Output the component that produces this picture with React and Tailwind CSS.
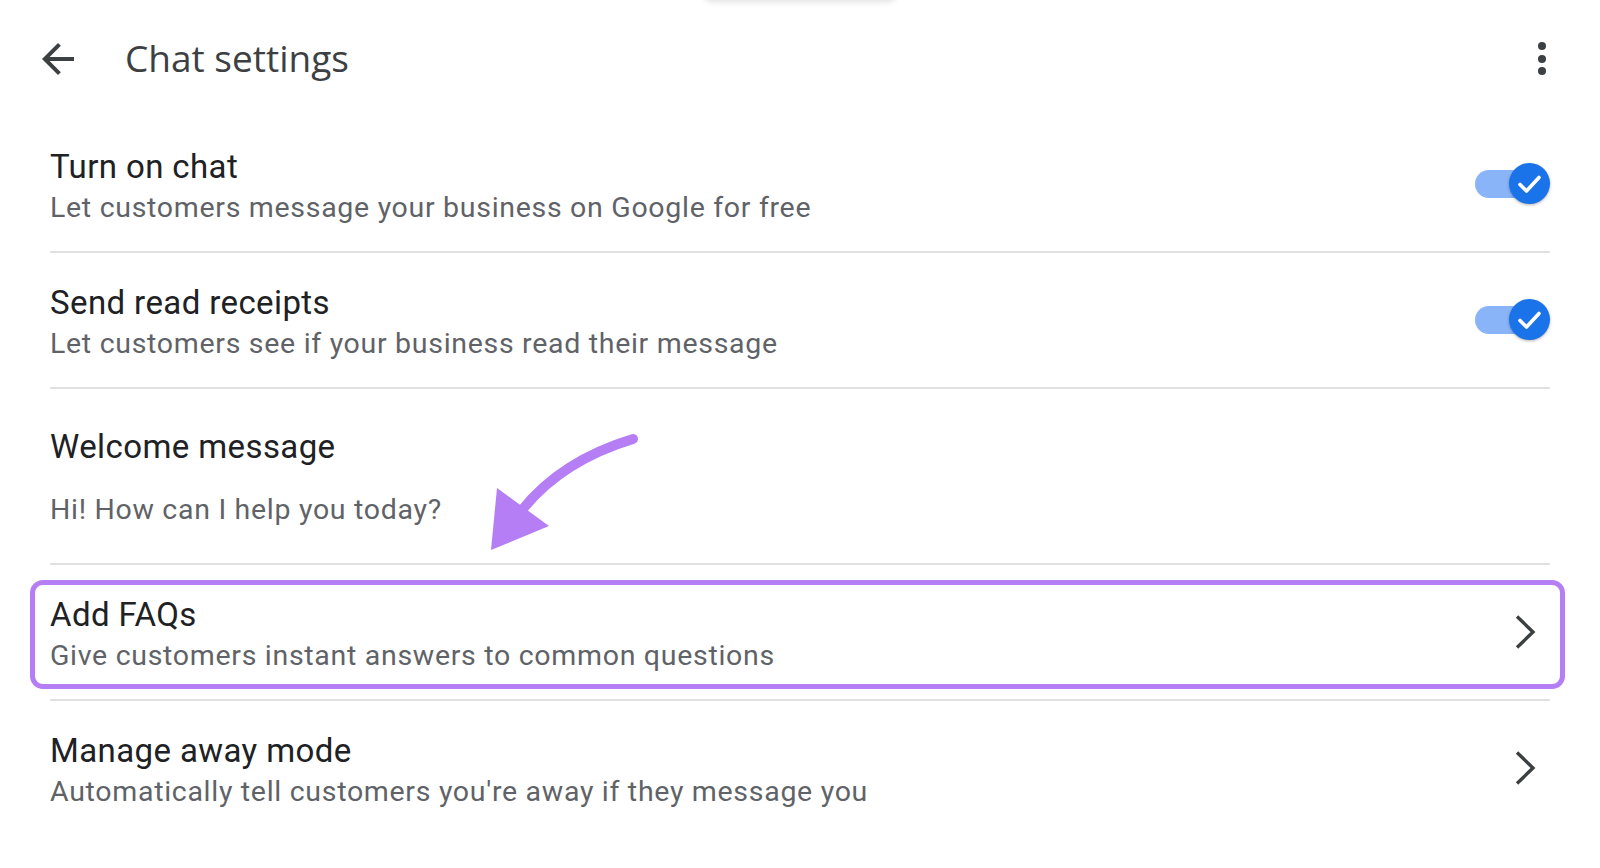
import { useState } from "react";

const ROBOTO = { fontFamily: "Roboto, 'Liberation Sans', sans-serif" };

function BackArrow() {
  return (
    <svg width="48" height="48" viewBox="0 0 24 24" className="text-[#3c4043]">
      <path
        fill="currentColor"
        d="M20 11H7.83l5.59-5.59L12 4l-8 8 8 8 1.41-1.41L7.83 13H20v-2z"
      />
    </svg>
  );
}

function Kebab() {
  return (
    <div className="flex flex-col items-center gap-[4.5px]">
      <span className="w-[8px] h-[8px] rounded-full bg-[#3c4043]" />
      <span className="w-[8px] h-[8px] rounded-full bg-[#3c4043]" />
      <span className="w-[8px] h-[8px] rounded-full bg-[#3c4043]" />
    </div>
  );
}

function Toggle({ on, onChange }) {
  return (
    <button
      onClick={onChange}
      className="relative w-[75px] h-[41px] shrink-0 cursor-pointer mb-[6px]"
    >
      <span className="absolute left-0 top-[6.5px] w-[62px] h-[28px] rounded-full bg-[#8ab4f8]" />
      <span className="absolute right-0 top-0 w-[41px] h-[41px] rounded-full bg-[#1a73e8] shadow-[0_1px_3px_rgba(0,0,0,0.3)] flex items-center justify-center">
        {on && (
          <svg width="41" height="41" viewBox="0 0 41 41">
            <path
              d="M11 21.5l6.5 6.5L30 14.5"
              fill="none"
              stroke="white"
              strokeWidth="3.6"
              strokeLinecap="round"
              strokeLinejoin="round"
            />
          </svg>
        )}
      </span>
    </button>
  );
}

function Chevron() {
  return (
    <svg width="24" height="36" viewBox="0 0 24 36" className="shrink-0 mr-[13px] mb-[5px]">
      <path
        d="M4 2.5l16 15.5-16 15.5"
        fill="none"
        stroke="#3c4043"
        strokeWidth="3.4"
      />
    </svg>
  );
}

function RowText({ title, subtitle }) {
  return (
    <div className="flex flex-col" style={ROBOTO}>
      <div className="text-[33px] leading-[40px] text-[#202124] tracking-[0.4px]">
        {title}
      </div>
      <div className="mt-[3px] text-[28.5px] leading-[36px] text-[#5f6368] tracking-[0.7px]">
        {subtitle}
      </div>
    </div>
  );
}

export default function App() {
  const [chat, setChat] = useState(true);
  const [receipts, setReceipts] = useState(true);

  return (
    <div className="relative min-h-screen bg-white overflow-hidden">
      {/* faint shadow of the sheet handle above */}
      <div className="absolute left-1/2 -translate-x-1/2 top-[-10px] w-[190px] h-[10px] rounded-b-md shadow-[0_2px_6px_rgba(0,0,0,0.12)] bg-white" />

      {/* Header */}
      <header className="h-[117px] flex items-center pl-[34px] pr-[54px]">
        <BackArrow />
        <h1
          className="ml-[43px] mb-[2px] text-[37px] text-[#3c4043] flex-1"
          style={{ fontFamily: "'Open Sans', Lato, sans-serif" }}
        >
          Chat settings
        </h1>
        <Kebab />
      </header>

      <div className="mx-[50px]">
        {/* Turn on chat */}
        <div className="flex items-center justify-between pt-[30px] pb-[25px] border-b-2 border-[#e0e0e0]">
          <RowText
            title="Turn on chat"
            subtitle="Let customers message your business on Google for free"
          />
          <Toggle on={chat} onChange={() => setChat(!chat)} />
        </div>

        {/* Send read receipts */}
        <div className="flex items-center justify-between pt-[30px] pb-[25px] border-b-2 border-[#e0e0e0]">
          <RowText
            title="Send read receipts"
            subtitle="Let customers see if your business read their message"
          />
          <Toggle on={receipts} onChange={() => setReceipts(!receipts)} />
        </div>

        {/* Welcome message */}
        <div className="relative pt-[38px] pb-[35px] border-b-2 border-[#e0e0e0]" style={ROBOTO}>
          <div className="text-[33px] leading-[40px] text-[#202124] tracking-[0.4px]">
            Welcome message
          </div>
          <div className="mt-[25px] text-[28.5px] leading-[36px] text-[#5f6368] tracking-[0.7px]">
            Hi! How can I help you today?
          </div>
          {/* annotation arrow */}
          <svg
            className="absolute left-[380px] top-[40px]"
            width="220"
            height="130"
            viewBox="430 429 220 130"
          >
            <path
              d="M633 439 C 590 452, 550 475, 522 510"
              fill="none"
              stroke="#b57ef4"
              strokeWidth="10"
              strokeLinecap="round"
            />
            <polygon points="491,550 497,488 549,526" fill="#b57ef4" />
          </svg>
        </div>

        {/* Add FAQs (highlighted) */}
        <div className="relative flex items-center justify-between pt-[30px] pb-[25px] border-b-2 border-[#e0e0e0]">
          <div className="absolute top-[15px] bottom-[10px] left-[-20px] right-[-15px] rounded-[13px] border-[5px] border-[#b57ef4] pointer-events-none" />
          <RowText
            title="Add FAQs"
            subtitle="Give customers instant answers to common questions"
          />
          <Chevron />
        </div>

        {/* Manage away mode */}
        <div className="flex items-center justify-between pt-[30px] pb-[25px]">
          <RowText
            title="Manage away mode"
            subtitle="Automatically tell customers you're away if they message you"
          />
          <Chevron />
        </div>
      </div>
    </div>
  );
}
